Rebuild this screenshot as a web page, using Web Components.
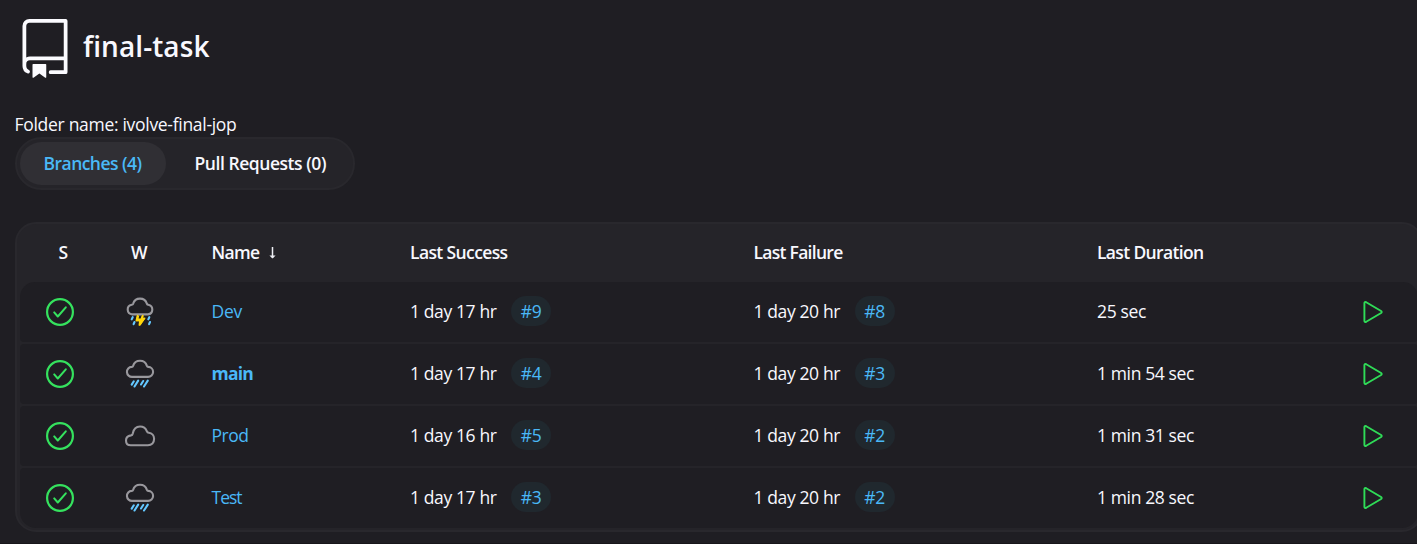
<!DOCTYPE html>
<html lang="en">
<head>
<meta charset="utf-8">
<title>final-task</title>
<style>
html{background:#1f1e23}
body{margin:0;height:544px;overflow:hidden;background:#1f1e23;color:#f8f8fe;font-family:"Open Sans","Noto Sans",sans-serif;font-size:17.5px;line-height:24px}
</style>
</head>
<body>
<folder-page></folder-page>
<script>
const define = (name, html, ready) => {
  const t = document.createElement('template');
  t.innerHTML = html;
  customElements.define(name, class extends HTMLElement {
    constructor() {
      super();
      this.attachShadow({mode: 'open'}).append(t.content.cloneNode(true));
    }
    connectedCallback() { if (ready) ready(this, this.shadowRoot); }
  });
};

// Text tracked to fill the width given in its "w" attribute.
define('fit-text', `<style>:host{display:inline-block;white-space:pre}span{display:inline-block}</style><span><slot></slot></span>`, (el, root) => {
  const w = +el.getAttribute('w'), s = root.querySelector('span');
  const n = [...el.textContent].length;
  el.style.width = w + 'px';
  s.style.letterSpacing = '0';
  s.style.letterSpacing = ((w - s.getBoundingClientRect().width) / n) + 'px';
});

define('repo-icon', `<style>:host{display:block;width:60px;height:60px}svg{display:block}</style>
<svg width="60" height="60" viewBox="0 0 24 24" fill="#fbfbff"><path d="M3 2.75A2.75 2.75 0 0 1 5.75 0h14.5a.75.75 0 0 1 .75.75v20.5a.75.75 0 0 1-.75.75h-6a.75.75 0 0 1 0-1.5h5.25v-4H6A1.5 1.5 0 0 0 4.5 18v.75c0 .716.43 1.334 1.05 1.605a.75.75 0 0 1-.6 1.374A3.251 3.251 0 0 1 3 18.75ZM19.5 1.5H5.75c-.69 0-1.25.56-1.25 1.25v12.651A2.989 2.989 0 0 1 6 15h13.5Z"/><path d="M7 18.25a.25.25 0 0 1 .25-.25h5a.25.25 0 0 1 .25.25v5.01a.25.25 0 0 1-.397.201l-2.206-1.604a.25.25 0 0 0-.294 0L7.397 23.46a.25.25 0 0 1-.397-.2Z"/></svg>`);

define('success-icon', `<style>:host,svg{display:block;width:30px;height:30px}</style>
<svg viewBox="0 0 30 30" fill="none" stroke="#35e25e" stroke-linecap="round" stroke-linejoin="round"><circle cx="15" cy="15" r="12.9" stroke-width="2.2"/><path d="M9.2 15.4l3.6 4.1 8-9.2" stroke-width="2"/></svg>`);

define('play-icon', `<style>:host,svg{display:block;width:24px;height:26px}</style>
<svg viewBox="0 0 24 26" fill="none" stroke="#2fdc57" stroke-width="1.9" stroke-linejoin="round"><path d="M3.4 4.2v17.6c0 1 .9 1.5 1.8 1L20.1 14c.8-.5.8-1.5 0-2L5.2 3.2c-.9-.5-1.8 0-1.8 1Z"/></svg>`);

const WEATHER = {
  storm: '<path d="M7.2 17.4A4.9 4.9 0 0 1 6.7 7.7Q7.8 7.6 8.1 6.8A7.2 7.2 0 0 1 21.9 6.8Q22.3 7.7 23.2 7.7A4.9 4.9 0 0 1 23 17.4Z" stroke="#99989d"/><path d="M7.7 20.2l-1 2.2M9.5 25l-.9 2.2M24.3 20.2l-1 2.2M25 25l-.9 2.2" stroke="#64c8ff" stroke-width="2.1"/><path d="M12 18.5h2.3l-.7 3h2l1.2-3h1.9l-.6 2.3h2.4L15.6 28.4h-1.7l.6-4.2h-3.8Z" fill="#ffd60a"/><path d="M12.5 18.6l-1.2 4.8h3.6l-.6 4.6 5.3-6.4h-2.8l1-3" stroke="#ffd60a" stroke-width="1.5"/>',
  rain: '<path d="M7.2 17.9A5 5 0 0 1 6.7 7.9Q7.8 7.8 8.1 6.9A7.2 7.2 0 0 1 21.9 6.9Q22.3 7.9 23.2 7.9A5 5 0 0 1 23 17.9Z" stroke="#99989d"/><path d="M8.8 22.3l-2.1 3.3M13.2 21.6l-3.7 5.9M18.2 22l-2.2 3.5M22.8 21.6L19 27.5" stroke="#64c8ff" stroke-width="2.1"/>',
  cloud: '<path d="M5.8 24.3C2.6 24.3 1 22.2 1 19.4S3.1 14.8 6 14.4C7.2 14.2 7.5 13.7 7.8 12.4 8.6 8.3 11.2 5.5 15 5.5c3.4 0 5.8 2 6.9 4.8.4 1 .9 1.3 1.9 1.4 3.1.3 5.3 2.8 5.3 6.1 0 3.9-2.4 6.5-6.2 6.5Z" stroke="#99989d"/>'
};
define('weather-icon', `<style>:host,svg{display:block;width:30px;height:30px}svg{overflow:visible}</style><svg viewBox="0 0 30 30" fill="none" stroke-width="2.1" stroke-linecap="round" stroke-linejoin="round"></svg>`,
  (el, root) => root.querySelector('svg').innerHTML = WEATHER[el.getAttribute('kind')]);

define('build-badge', `<style>:host{display:flex;align-items:center;justify-content:center;width:40px;height:30px;border-radius:15px;background:#20282e;color:#4ab8f7}</style><slot></slot>`);

define('tab-bar', `<style>
:host{display:flex;box-sizing:border-box;width:340px;height:53px;padding:3px;border:2px solid #29282d;border-radius:27px;background:#252429;font-weight:650}
div{display:flex;box-sizing:border-box;align-items:center;height:43px;border-radius:22px;padding-bottom:2px}
.on{background:#302f34;color:#4ab8f7;padding-left:23.5px;width:146px}
.off{padding-left:28.5px}
</style><div class="on"><fit-text w="98">Branches (4)</fit-text></div><div class="off"><fit-text w="131.5">Pull Requests (0)</fit-text></div>`);

define('branch-row', `<style>
:host{display:grid;grid-template-columns:var(--cols);align-items:center;height:60px;border-radius:4px;background:#1f1e23}
.name,.run,.d{padding-bottom:2px}
.run{display:flex;align-items:center;gap:14.5px}
.name{color:#4ab8f7}
:host([main]) .name{font-weight:700}
success-icon{margin-left:25px}weather-icon{margin-left:25px}play-icon{margin-left:-1px}
</style><success-icon></success-icon><span class="w"></span><span class="name"></span><span class="run s"></span><span class="run f"></span><span class="d"></span><play-icon></play-icon>`,
(el, root) => {
  const a = n => el.getAttribute(n), q = s => root.querySelector(s);
  q('.w').innerHTML = `<weather-icon kind="${a('weather')}"></weather-icon>`;
  q('.name').innerHTML = `<fit-text w="${a('name-w')}">${a('name')}</fit-text>`;
  for (const [k, v] of [['s', a('success')], ['f', a('failure')]]) {
    const [time, id] = v.split('|');
    q('.' + k).innerHTML = `<fit-text w="86.5">${time}</fit-text><build-badge><fit-text w="20.5">${id}</fit-text></build-badge>`;
  }
  q('.d').innerHTML = `<fit-text w="${a('dur-w')}">${a('duration')}</fit-text>`;
});

define('branch-table', `<style>
:host{--cols:80px 111.5px 198.5px 343.5px 343.5px 265px 1fr;display:flex;flex-direction:column;gap:2px;box-sizing:border-box;width:1407.5px;height:310px;padding:0 3px 2px;border:2px solid #29282d;border-radius:21px;background:#252429}
header{display:grid;box-sizing:border-box;grid-template-columns:var(--cols);align-items:center;height:58px;margin-bottom:-2px;padding-bottom:2px;font-weight:650}
header>:nth-child(1){margin-left:38.5px}header>:nth-child(2){margin-left:31px}
.n{display:flex;align-items:center;gap:8px}
.n svg{display:block;margin-top:2px}
::slotted(:first-child){border-radius:15px 15px 4px 4px}
::slotted(:last-child){border-radius:4px 4px 16px 16px}
</style><header><fit-text w="11">S</fit-text><fit-text w="18">W</fit-text><span class="n"><fit-text w="48">Name</fit-text><svg width="9" height="14" viewBox="0 0 9 14" fill="none" stroke="#eeeef4" stroke-width="1.5"><path d="M4.5 1v11"/><path d="M1.4 9.4l3.1 3 3.1-3Z" fill="#eeeef4" stroke="none"/></svg></span><fit-text w="97.5">Last Success</fit-text><fit-text w="89">Last Failure</fit-text><fit-text w="106.5">Last Duration</fit-text></header><slot></slot>`);

define('folder-page', `<style>
:host{display:block;box-sizing:border-box;width:1417px;height:544px;padding:19px 0 0 15px;overflow:hidden;border-bottom:1px solid #17161a}
.title{display:flex;gap:8px;height:60px}
h1{margin:8px 0 0;font-size:28px;line-height:38px;font-weight:650}
p{margin:33px 0 1px -.5px;height:24px}
branch-table{margin-top:32px}
</style><div class="title"><repo-icon></repo-icon><h1><fit-text w="126.5">final-task</fit-text></h1></div>
<p><fit-text w="222">Folder name: ivolve-final-jop</fit-text></p>
<tab-bar></tab-bar>
<branch-table>
<branch-row weather="storm" name="Dev" name-w="30.5" success="1 day 17 hr|#9" failure="1 day 20 hr|#8" duration="25 sec" dur-w="49"></branch-row>
<branch-row main weather="rain" name="main" name-w="41.5" success="1 day 17 hr|#4" failure="1 day 20 hr|#3" duration="1 min 54 sec" dur-w="97"></branch-row>
<branch-row weather="cloud" name="Prod" name-w="37" success="1 day 16 hr|#5" failure="1 day 20 hr|#2" duration="1 min 31 sec" dur-w="97"></branch-row>
<branch-row weather="rain" name="Test" name-w="30" success="1 day 17 hr|#3" failure="1 day 20 hr|#2" duration="1 min 28 sec" dur-w="97"></branch-row>
</branch-table>`);
</script>
</body>
</html>
